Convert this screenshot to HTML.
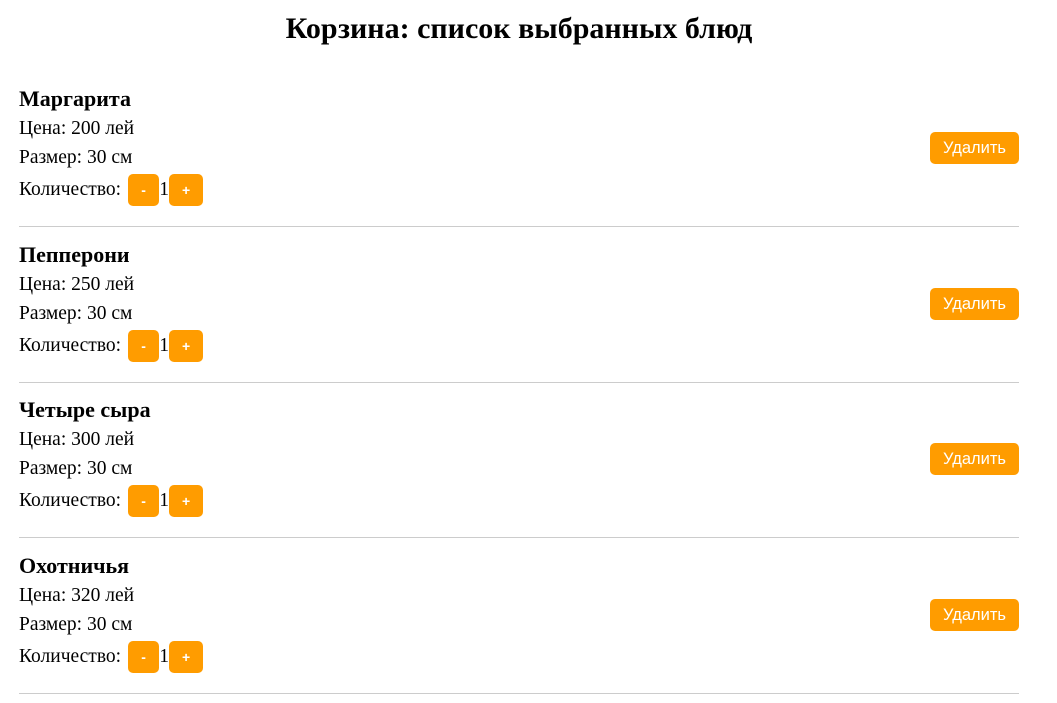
<!DOCTYPE html>
<html><head><meta charset="utf-8"><style>
body{margin:0;width:1057px;height:703px;background:#fff;font-family:"Liberation Serif",serif;color:#000;position:relative;overflow:hidden}
h1{position:absolute;top:11px;left:0;width:1038px;margin:0;text-align:center;font-size:30px;line-height:36px;font-weight:bold}
.it{position:absolute;left:19px;width:1000px;height:156px}
.n{position:absolute;top:6px;left:0;font-weight:bold;font-size:22px;line-height:26px}
.l{position:absolute;left:0;font-size:19.5px;line-height:22px}
.p{top:38px}.s{top:67px}
.q{top:94px;display:flex;align-items:center;height:32px}
.b{display:inline-block;background:#ff9c00;color:#fff;border-radius:5px;font-family:"Liberation Sans",sans-serif;font-size:14px;font-weight:bold;text-align:center;height:32px;line-height:32px}
.m{width:31px;margin-left:7px}.pl{width:34px}
.num{width:10px;text-align:center}
.d{position:absolute;right:0;top:52px;width:89px;font-size:16.5px;font-weight:normal}
.hr{position:absolute;left:0;right:0;top:146px;height:1px;background:#ccc}
</style></head><body>
<h1>Корзина: список выбранных блюд</h1>
<div class="it" style="top:80px"><div class="n">Маргарита</div><div class="l p">Цена: 200 лей</div><div class="l s">Размер: 30 см</div><div class="l q">Количество: <span class="b m">-</span><span class="num">1</span><span class="b pl">+</span></div><span class="b d">Удалить</span><div class="hr"></div></div>
<div class="it" style="top:235.5px"><div class="n">Пепперони</div><div class="l p">Цена: 250 лей</div><div class="l s">Размер: 30 см</div><div class="l q">Количество: <span class="b m">-</span><span class="num">1</span><span class="b pl">+</span></div><span class="b d">Удалить</span><div class="hr"></div></div>
<div class="it" style="top:391px"><div class="n">Четыре сыра</div><div class="l p">Цена: 300 лей</div><div class="l s">Размер: 30 см</div><div class="l q">Количество: <span class="b m">-</span><span class="num">1</span><span class="b pl">+</span></div><span class="b d">Удалить</span><div class="hr"></div></div>
<div class="it" style="top:546.5px"><div class="n">Охотничья</div><div class="l p">Цена: 320 лей</div><div class="l s">Размер: 30 см</div><div class="l q">Количество: <span class="b m">-</span><span class="num">1</span><span class="b pl">+</span></div><span class="b d">Удалить</span><div class="hr"></div></div>
</body></html>
